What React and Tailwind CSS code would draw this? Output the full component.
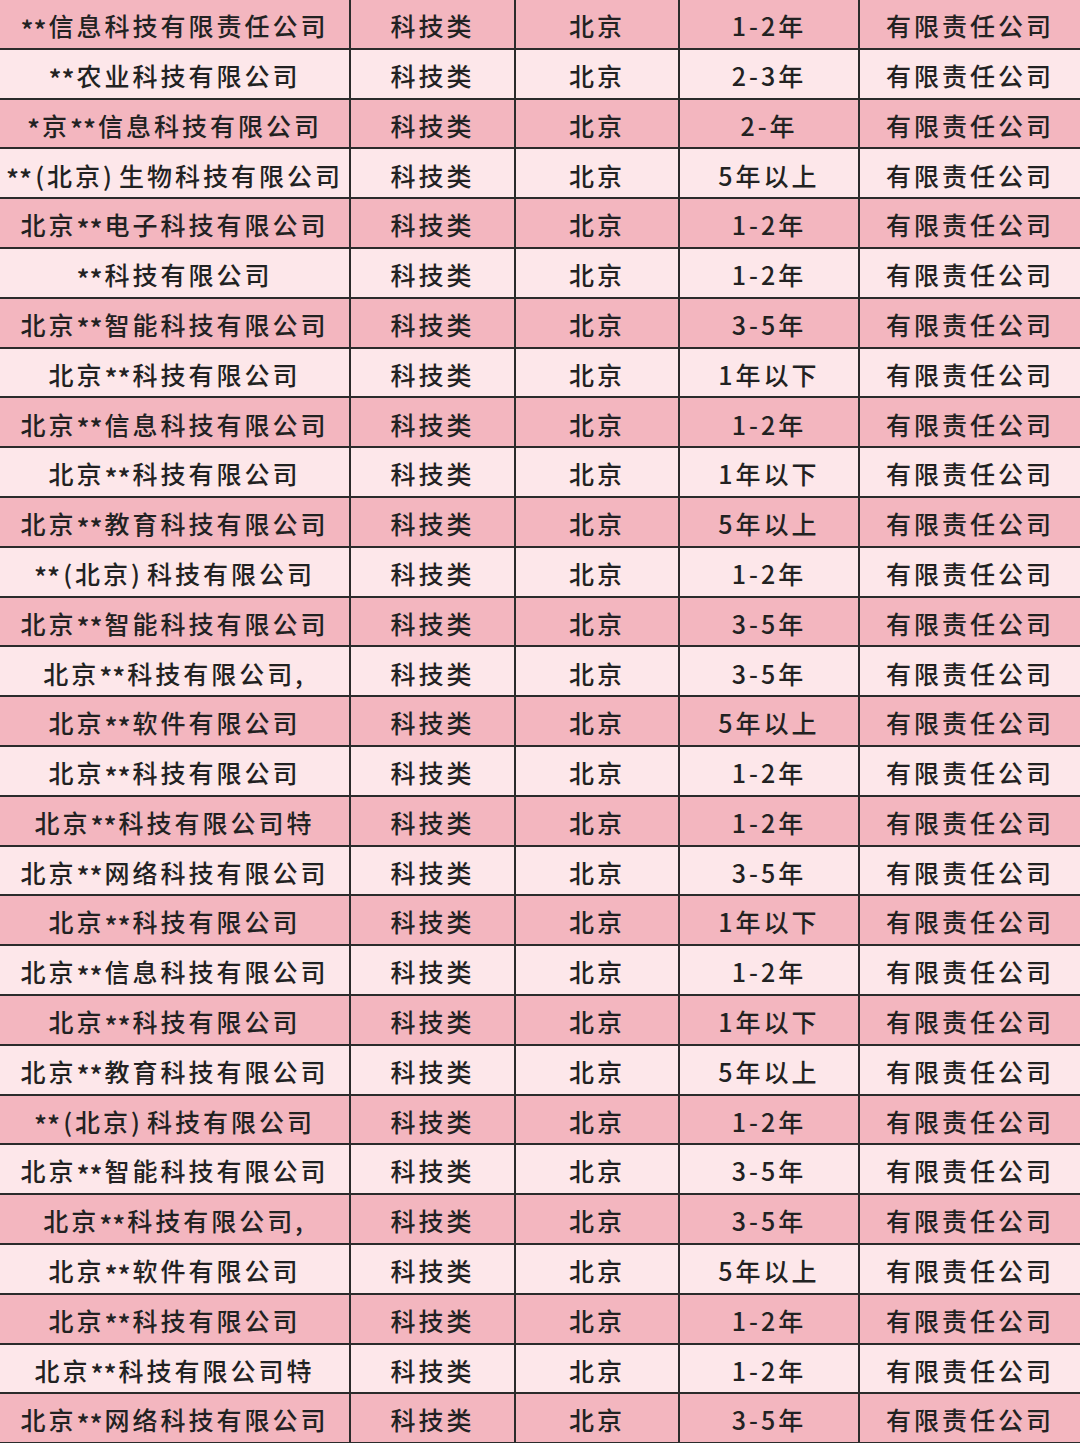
import React from 'react';

const rows = [
  ['**信息科技有限责任公司', '1-2年'],
  ['**农业科技有限公司', '2-3年'],
  ['*京**信息科技有限公司', '2-年'],
  ['**(北京)生物科技有限公司', '5年以上'],
  ['北京**电子科技有限公司', '1-2年'],
  ['**科技有限公司', '1-2年'],
  ['北京**智能科技有限公司', '3-5年'],
  ['北京**科技有限公司', '1年以下'],
  ['北京**信息科技有限公司', '1-2年'],
  ['北京**科技有限公司', '1年以下'],
  ['北京**教育科技有限公司', '5年以上'],
  ['**(北京)科技有限公司', '1-2年'],
  ['北京**智能科技有限公司', '3-5年'],
  ['北京**科技有限公司,', '3-5年'],
  ['北京**软件有限公司', '5年以上'],
  ['北京**科技有限公司', '1-2年'],
  ['北京**科技有限公司特', '1-2年'],
  ['北京**网络科技有限公司', '3-5年'],
  ['北京**科技有限公司', '1年以下'],
  ['北京**信息科技有限公司', '1-2年'],
  ['北京**科技有限公司', '1年以下'],
  ['北京**教育科技有限公司', '5年以上'],
  ['**(北京)科技有限公司', '1-2年'],
  ['北京**智能科技有限公司', '3-5年'],
  ['北京**科技有限公司,', '3-5年'],
  ['北京**软件有限公司', '5年以上'],
  ['北京**科技有限公司', '1-2年'],
  ['北京**科技有限公司特', '1-2年'],
  ['北京**网络科技有限公司', '3-5年'],
];

// asterisks sit lower and tighter in the source font
const Name = ({ text }) =>
  text.split(/(\*+|\(|\))/).filter(Boolean).map((part, i) => {
    if (part[0] === '*')
      return (
        <span key={i} className="relative top-[4px] text-[27px] tracking-[0px] mr-[2px]">
          {part}
        </span>
      );
    if (part === '(' || part === ')')
      return (
        <span key={i} className={part === '(' ? 'ml-[1px]' : 'mr-[4px]'}>
          {part}
        </span>
      );
    return <span key={i}>{part}</span>;
  });

const Cell = ({ children, last }) => (
  <div
    className={
      'flex items-center justify-center pt-1 whitespace-nowrap overflow-hidden ' +
      (last ? '' : 'border-r-2 border-[#2b2b2b]')
    }
  >
    {children}
  </div>
);

export default function App() {
  return (
    <div
      className="w-[1080px] h-[1443px] overflow-hidden bg-[#fde7ea] text-[25px] font-medium tracking-[3px] text-[#222]"
      style={{ fontFamily: '"Noto Sans CJK SC", "Noto Sans", sans-serif' }}
    >
      {rows.map(([name, years], i) => (
        <div
          key={i}
          className={
            'grid grid-cols-[351px_165px_164px_180px_1fr] h-[49.8px] border-b-2 border-[#2b2b2b] ' +
            (i % 2 === 0 ? 'bg-[#f3b6bf]' : 'bg-[#fde7ea]')
          }
        >
          <Cell>
            <Name text={name} />
          </Cell>
          <Cell>科技类</Cell>
          <Cell>北京</Cell>
          <Cell>{years}</Cell>
          <Cell last>有限责任公司</Cell>
        </div>
      ))}
    </div>
  );
}
